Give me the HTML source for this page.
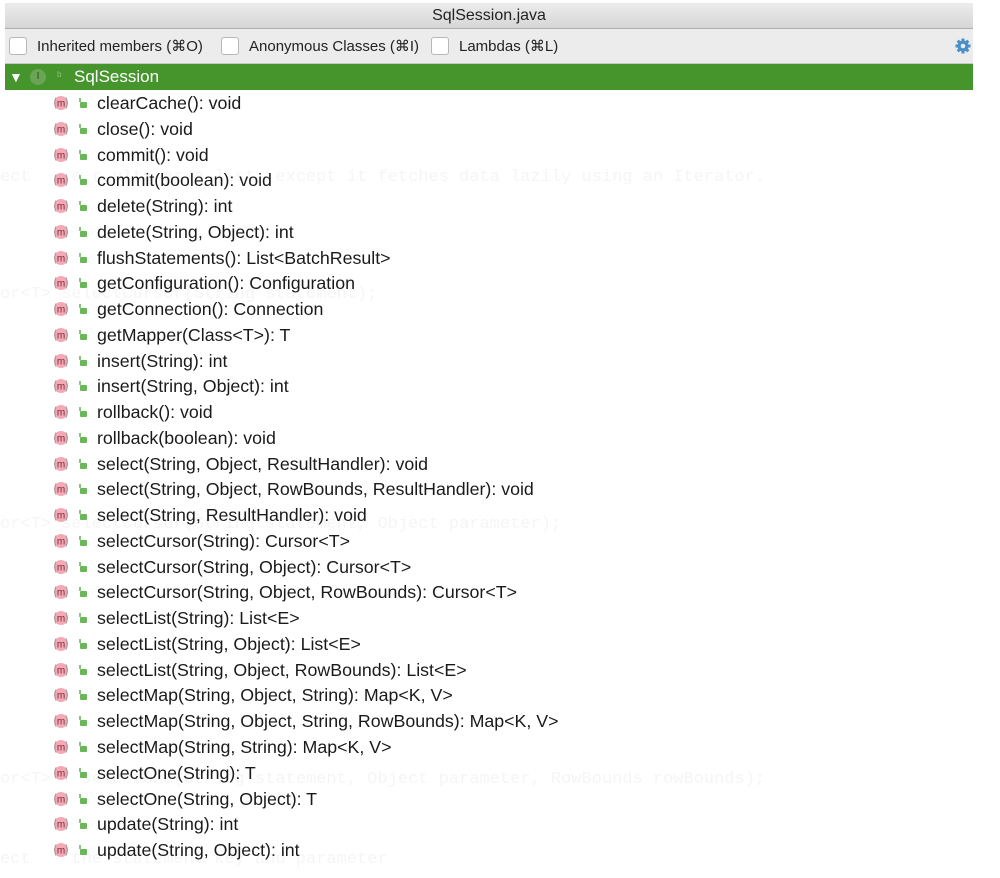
<!DOCTYPE html>
<html><head><meta charset="utf-8"><style>
body{margin:0;width:1000px;height:878px;background:#fff;position:relative;overflow:hidden;font-family:"Liberation Sans",sans-serif}
.ghost{position:absolute;left:0;font-family:"Liberation Mono",monospace;font-size:17px;color:#f5f5f5;white-space:pre}
.pop{position:absolute;left:5px;top:3px;width:968px;height:875px}
.title{position:absolute;left:0;top:0;width:968px;height:25px;background:linear-gradient(#ececec,#d6d6d6);border-bottom:1px solid #b0b0b0;text-align:center;font-size:16px;line-height:25px;color:#222}
.bar{position:absolute;left:0;top:26px;width:968px;height:34px;background:#ececec;border-bottom:1px solid #c8c8c8;font-size:15px;color:#222}
.cb{position:absolute;top:8px;width:16px;height:16px;background:#fff;border:1px solid #b8b8b8;border-radius:3px}
.bl{position:absolute;top:8px}
.green{position:absolute;left:0;top:61px;width:968px;height:26px;background:#46952c;color:#fff;font-size:17px;line-height:26px}
.row{position:absolute;left:0;height:26px;line-height:26px;font-size:17.8px;color:#1a1a1a;white-space:nowrap}
.m{position:absolute;left:48px;top:5px;width:16px;height:16px}
.lk{position:absolute;left:73px;top:7px}
.t{position:absolute;left:92px}
</style></head><body>
<div class="ghost" style="top:168px">ect    e r ults as a list, except it fetches data lazily using an Iterator.</div>
<div class="ghost" style="top:285px">or&lt;T&gt; selectCursor(String statement);</div>
<div class="ghost" style="top:515px">or&lt;T&gt; selectCursor(String statement, Object parameter);</div>
<div class="ghost" style="top:770px">or&lt;T&gt; T selectOne(String statement, Object parameter, RowBounds rowBounds);</div>
<div class="ghost" style="top:850px">ect    the statement key and parameter</div>
<div class="pop">
<div class="title">SqlSession.java</div>
<div class="bar">
<div class="cb" style="left:4px"></div><span class="bl" style="left:32px">Inherited members (⌘O)</span>
<div class="cb" style="left:216px"></div><span class="bl" style="left:244px">Anonymous Classes (⌘I)</span>
<div class="cb" style="left:426px"></div><span class="bl" style="left:454px">Lambdas (⌘L)</span>
<svg style="position:absolute;left:950px;top:9px" width="16" height="16" viewBox="0 0 16 16"><g fill="#4a90c8"><circle cx="8" cy="8" r="5.5"/><rect x="6.5" y="0.5" width="3" height="15"/><rect x="0.5" y="6.5" width="15" height="3"/><rect x="6.5" y="0.5" width="3" height="15" transform="rotate(45 8 8)"/><rect x="6.5" y="0.5" width="3" height="15" transform="rotate(-45 8 8)"/></g><circle cx="8" cy="8" r="2.3" fill="#ececec"/></svg>
</div>
<div class="green"><span style="position:absolute;left:4px;font-size:14px">▼</span>
<span style="position:absolute;left:25px;top:5px;width:16px;height:16px;border-radius:50%;background:#6aa556;color:#2a4a20;font-size:10px;line-height:16px;text-align:center">I</span>
<span style="position:absolute;left:52px;top:-1px;color:#8cc07a;font-size:12px">ᵇ</span>
<span style="position:absolute;left:69px">SqlSession</span></div>
<div id="rows"></div>
</div>
<script>
var items=["clearCache(): void","close(): void","commit(): void","commit(boolean): void","delete(String): int","delete(String, Object): int","flushStatements(): List<BatchResult>","getConfiguration(): Configuration","getConnection(): Connection","getMapper(Class<T>): T","insert(String): int","insert(String, Object): int","rollback(): void","rollback(boolean): void","select(String, Object, ResultHandler): void","select(String, Object, RowBounds, ResultHandler): void","select(String, ResultHandler): void","selectCursor(String): Cursor<T>","selectCursor(String, Object): Cursor<T>","selectCursor(String, Object, RowBounds): Cursor<T>","selectList(String): List<E>","selectList(String, Object): List<E>","selectList(String, Object, RowBounds): List<E>","selectMap(String, Object, String): Map<K, V>","selectMap(String, Object, String, RowBounds): Map<K, V>","selectMap(String, String): Map<K, V>","selectOne(String): T","selectOne(String, Object): T","update(String): int","update(String, Object): int"];
var h="";
items.forEach(function(s,i){
var top=87+i*25.76;
s=s.replace(/</g,"&lt;").replace(/>/g,"&gt;");
h+='<div class="row" style="top:'+top+'px;width:900px"><svg class="m" viewBox="0 0 16 16"><circle cx="8" cy="8" r="7" fill="#f4a9b4"/><text x="8" y="11.5" font-size="10" text-anchor="middle" fill="#7a2a3a" font-family="Liberation Sans">m</text><path d="M3 2.5Q0.5 8 3 13.5M13 2.5Q15.5 8 13 13.5" stroke="#999" fill="none" stroke-width="1"/></svg><svg class="lk" width="10" height="12" viewBox="0 0 10 12"><path d="M2 1v4" stroke="#6cb65a" stroke-width="1.6" fill="none"/><rect x="2" y="5" width="7" height="6" rx="1" fill="#6cb65a"/></svg><span class="t">'+s+'</span></div>';
});
document.getElementById("rows").innerHTML=h;
</script>
</body></html>
